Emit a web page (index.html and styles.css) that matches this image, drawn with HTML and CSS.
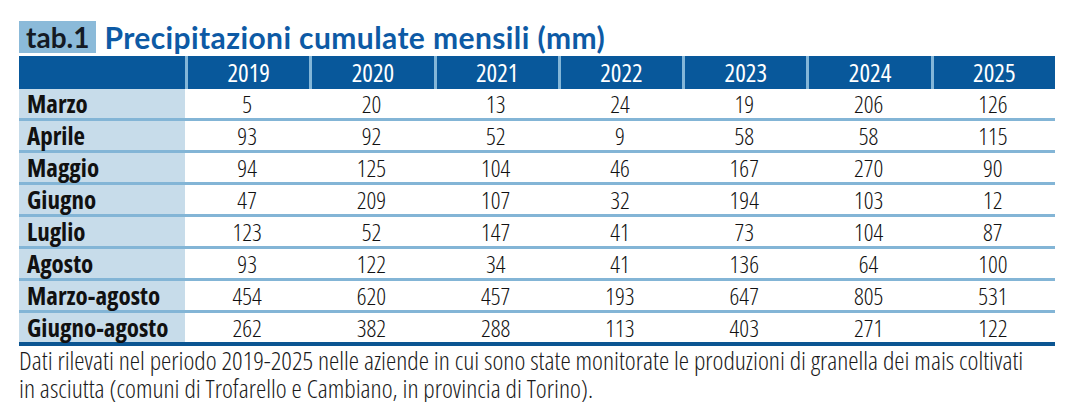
FILE: index.html
```html
<!DOCTYPE html>
<html lang="it">
<head>
<meta charset="utf-8">
<title>tab.1 Precipitazioni cumulate mensili (mm)</title>
<link rel="stylesheet" href="styles.css">
</head>
<body>
<div class="page">
  <div class="title-row">
    <span class="tab-label">tab.1</span>
    <h1 class="title">Precipitazioni cumulate mensili (mm)</h1>
  </div>
  <table class="data">
    <colgroup>
      <col class="c-label">
      <col><col><col><col><col><col><col>
    </colgroup>
    <thead>
      <tr>
        <th></th><th>2019</th><th>2020</th><th>2021</th><th>2022</th><th>2023</th><th>2024</th><th>2025</th>
      </tr>
    </thead>
    <tbody>
      <tr><th>Marzo</th><td>5</td><td>20</td><td>13</td><td>24</td><td>19</td><td>206</td><td>126</td></tr>
      <tr><th>Aprile</th><td>93</td><td>92</td><td>52</td><td>9</td><td>58</td><td>58</td><td>115</td></tr>
      <tr><th>Maggio</th><td>94</td><td>125</td><td>104</td><td>46</td><td>167</td><td>270</td><td>90</td></tr>
      <tr><th>Giugno</th><td>47</td><td>209</td><td>107</td><td>32</td><td>194</td><td>103</td><td>12</td></tr>
      <tr><th>Luglio</th><td>123</td><td>52</td><td>147</td><td>41</td><td>73</td><td>104</td><td>87</td></tr>
      <tr><th>Agosto</th><td>93</td><td>122</td><td>34</td><td>41</td><td>136</td><td>64</td><td>100</td></tr>
      <tr><th>Marzo-agosto</th><td>454</td><td>620</td><td>457</td><td>193</td><td>647</td><td>805</td><td>531</td></tr>
      <tr><th>Giugno-agosto</th><td>262</td><td>382</td><td>288</td><td>113</td><td>403</td><td>271</td><td>122</td></tr>
    </tbody>
  </table>
  <p class="note">Dati rilevati nel periodo 2019-2025 nelle aziende in cui sono state monitorate le produzioni di granella dei mais coltivati in asciutta (comuni di Trofarello e Cambiano, in provincia di Torino).</p>
</div>
</body>
</html>
```
FILE: styles.css
```css
html, body {
  margin: 0;
  padding: 0;
  background: #ffffff;
}

.page {
  width: 1036px;
  padding: 21px 0 0 19px;
}

.title-row {
  display: flex;
  align-items: stretch;
  gap: 8px;
  height: 32px;
  margin-bottom: 3px;
}

.tab-label {
  display: flex;
  align-items: center;
  padding: 0 7px 0 7px;
  background: #8bbad9;
  color: #141a24;
  font-family: Lato, sans-serif;
  font-weight: bold;
  font-size: 28px;
  line-height: 1;
}

.title {
  margin: 0;
  display: flex;
  align-items: center;
  color: #0d5aa5;
  font-family: Lato, sans-serif;
  font-weight: bold;
  font-size: 30px;
  letter-spacing: 0.4px;
  line-height: 1;
}

.data {
  width: 1036px;
  table-layout: fixed;
  border-collapse: separate;
  border-spacing: 0;
}

.c-label {
  width: 166px;
}

.data thead th {
  box-sizing: border-box;
  height: 33px;
  padding: 0;
  background: #08589b;
  color: #ffffff;
  font-family: "Open Sans", sans-serif;
  font-stretch: 75%;
  font-weight: normal;
  font-size: 25px;
  line-height: 1;
  text-align: center;
  border-left: 3px solid #83b6d8;
}

.data thead th:first-child {
  border-left: none;
}

.data tbody th,
.data tbody td {
  box-sizing: border-box;
  height: 32px;
  padding: 0;
  line-height: 1;
  border-top: 3px solid #83b5d6;
}

.data tbody tr:first-child th,
.data tbody tr:first-child td {
  height: 29px;
  border-top: none;
}

.data tbody tr:last-child th,
.data tbody tr:last-child td {
  height: 36px;
  border-bottom: 4px solid #0b5592;
}

.data tbody th {
  background: #c7dcea;
  color: #111111;
  text-align: left;
  padding-left: 8px;
  font-family: "Open Sans", sans-serif;
  font-stretch: 75%;
  font-weight: bold;
  font-size: 25px;
  white-space: nowrap;
}

.data tbody td {
  text-align: center;
  color: #111111;
  font-family: "Open Sans", sans-serif;
  font-stretch: 75%;
  font-weight: 300;
  font-size: 24px;
}

.note {
  width: 1016px;
  margin: 0;
  color: #1a1a1a;
  font-family: "Open Sans", sans-serif;
  font-stretch: 78%;
  font-weight: 300;
  font-size: 26px;
  line-height: 28px;
}
```
